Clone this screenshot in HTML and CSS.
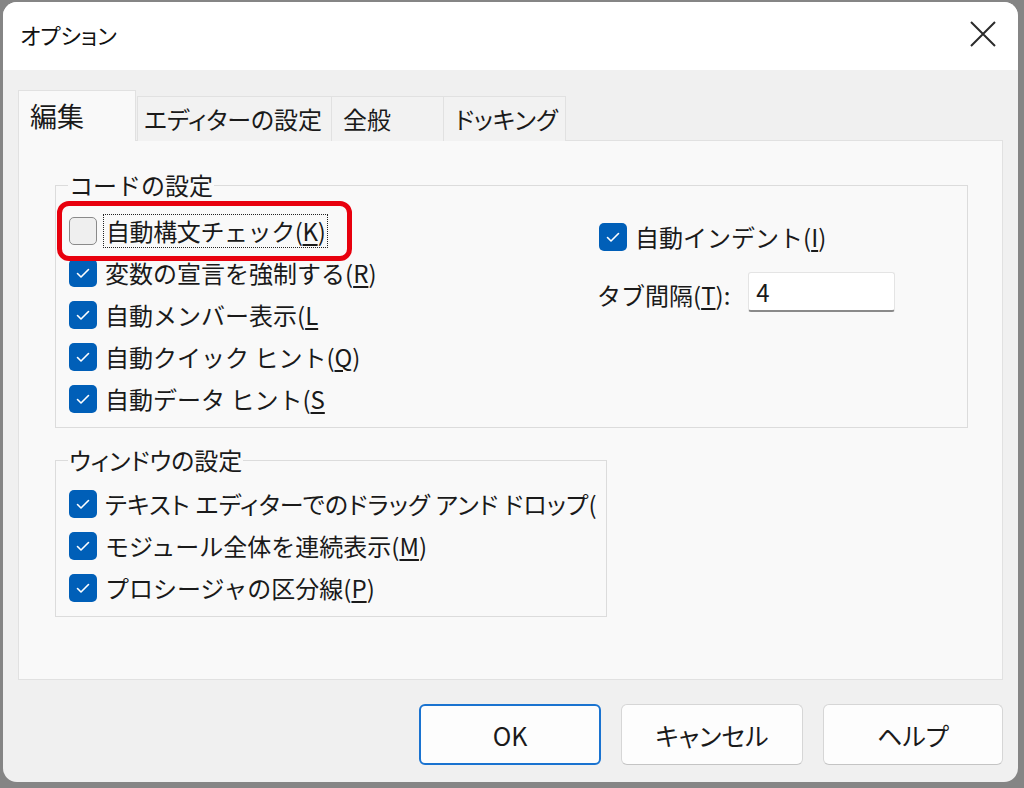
FILE: index.html
```html
<!DOCTYPE html>
<html lang="ja">
<head>
<meta charset="utf-8">
<title>オプション</title>
<link rel="stylesheet" href="styles.css">
</head>
<body>
<div class="window">
  <div class="titlebar">
    <span class="title">オプション</span>
    <svg class="close" width="26" height="26" viewBox="0 0 26 26"><path d="M1 1 L25 25 M25 1 L1 25" stroke="#2b2b2b" stroke-width="2" fill="none"/></svg>
  </div>
  <div class="content">
    <div class="tabs">
      <div class="tab active">編集</div>
      <div class="tab tab-editor">エディターの設定</div>
      <div class="tab tab-general">全般</div>
      <div class="tab tab-dock">ドッキング</div>
    </div>
    <div class="panel">
      <fieldset class="group group-code">
        <legend>コードの設定</legend>
        <div class="cols">
          <div class="col">
            <div class="row highlighted">
              <span class="cb off"></span>
              <span class="lbl focus">自動構文チェック(<u>K</u>)</span>
              <span class="redbox"></span>
            </div>
            <div class="row"><span class="cb on"><svg viewBox="0 0 28 28"><path d="M8.5 14.5 L12 18 L19.5 10.5"/></svg></span><span class="lbl">変数の宣言を強制する(<u>R</u>)</span></div>
            <div class="row"><span class="cb on"><svg viewBox="0 0 28 28"><path d="M8.5 14.5 L12 18 L19.5 10.5"/></svg></span><span class="lbl">自動メンバー表示(<u>L</u></span></div>
            <div class="row"><span class="cb on"><svg viewBox="0 0 28 28"><path d="M8.5 14.5 L12 18 L19.5 10.5"/></svg></span><span class="lbl">自動クイック ヒント(<u>Q</u>)</span></div>
            <div class="row"><span class="cb on"><svg viewBox="0 0 28 28"><path d="M8.5 14.5 L12 18 L19.5 10.5"/></svg></span><span class="lbl">自動データ ヒント(<u>S</u></span></div>
          </div>
          <div class="col col-right">
            <div class="row"><span class="cb on"><svg viewBox="0 0 28 28"><path d="M8.5 14.5 L12 18 L19.5 10.5"/></svg></span><span class="lbl">自動インデント(<u>I</u>)</span></div>
            <div class="tabrow">
              <span class="lbl">タブ間隔(<u>T</u>):</span>
              <span class="input">4</span>
            </div>
          </div>
        </div>
      </fieldset>
      <fieldset class="group group-window">
        <legend>ウィンドウの設定</legend>
        <div class="row"><span class="cb on"><svg viewBox="0 0 28 28"><path d="M8.5 14.5 L12 18 L19.5 10.5"/></svg></span><span class="lbl narrow">テキスト エディターでのドラッグ アンド ドロップ(</span></div>
        <div class="row"><span class="cb on"><svg viewBox="0 0 28 28"><path d="M8.5 14.5 L12 18 L19.5 10.5"/></svg></span><span class="lbl">モジュール全体を連続表示(<u>M</u>)</span></div>
        <div class="row"><span class="cb on"><svg viewBox="0 0 28 28"><path d="M8.5 14.5 L12 18 L19.5 10.5"/></svg></span><span class="lbl">プロシージャの区分線(<u>P</u>)</span></div>
      </fieldset>
    </div>
    <div class="footer">
      <button class="btn default">OK</button>
      <button class="btn">キャンセル</button>
      <button class="btn btn-help">ヘルプ</button>
    </div>
  </div>
</div>
</body>
</html>
```
FILE: styles.css
```css
* { box-sizing: border-box; }
html, body {
  margin: 0;
  padding: 0;
  width: 1024px;
  height: 788px;
  overflow: hidden;
  background: #858585;
  font-family: "Noto Sans CJK JP", "Noto Sans", sans-serif;
  color: #1a1a1a;
}
.window {
  margin: 2px 0 0 3px;
  width: 1015px;
  height: 780px;
  border-radius: 14px;
  overflow: hidden;
  background: #f0f0f0;
  display: flex;
  flex-direction: column;
}
.titlebar {
  height: 68px;
  background: #ffffff;
  display: flex;
  align-items: center;
  justify-content: space-between;
  padding: 0 22px 0 17px;
  flex: none;
}
.title {
  font-size: 22px;
  font-feature-settings: "palt";
  color: #111;
  margin-top: -4px;
}
.close { margin-top: -4px; }
.content {
  flex: 1;
  padding: 20px 15px 0 15px;
  display: flex;
  flex-direction: column;
}
.tabs {
  display: flex;
  align-items: flex-end;
  height: 51px;
  position: relative;
  z-index: 1;
  margin-bottom: -1px;
}
.tab {
  height: 45px;
  padding: 0 0 0 11px;
  font-size: 24px;
  font-feature-settings: "palt";
  line-height: 44px;
  background: #f2f2f2;
  border: 1px solid #e1e1e1;
  border-bottom: none;
  color: #1a1a1a;
  white-space: nowrap;
}
.tab.active {
  height: 51px;
  width: 118px;
  background: #f9f9f9;
  line-height: 50px;
  font-size: 27px;
  padding-left: 11px;
}
.tab-editor { width: 195px; padding-left: 6px; margin-left: 1px; }
.tab-general { width: 113px; margin-left: -1px; }
.tab-dock { width: 123px; margin-left: -1px; }
.panel {
  height: 540px;
  flex: none;
  background: #f9f9f9;
  border: 1px solid #e1e1e1;
  padding: 31px 0 0 36px;
}
.group {
  margin: 0;
  border: 1px solid #dcdcdc;
  padding: 12px 8px 7px 13px;
  min-width: 0;
}
.group legend {
  font-size: 24px;
  line-height: 26px;
  padding: 0 1px;
  margin-left: -1px;
}
.group-code { width: 913px; }
.group-window {
  width: 552px;
  margin-top: 19px;
  padding-top: 10px;
}
.group-window legend { font-feature-settings: "palt"; }
.cols {
  display: grid;
  grid-template-columns: 530px 1fr;
}
.col-right { padding-top: 6px; }
.row {
  height: 42px;
  display: flex;
  align-items: center;
  gap: 8px;
  font-size: 24px;
  white-space: nowrap;
}
.highlighted { position: relative; }
.redbox {
  position: absolute;
  left: -12px;
  top: -9px;
  width: 295px;
  height: 60px;
  border: 5px solid #e8000d;
  border-radius: 12px;
  pointer-events: none;
}
.cb {
  width: 28px;
  height: 28px;
  border-radius: 5px;
  flex: none;
  display: block;
}
.cb.on { background: #005fb8; }
.cb.on svg { width: 28px; height: 28px; display: block; }
.cb.on path { stroke: #ffffff; stroke-width: 1.6; fill: none; stroke-linecap: round; stroke-linejoin: round; }
.cb.off {
  background: #efefef;
  border: 1.5px solid #8a8a8a;
}
.lbl { line-height: 30px; }
.lbl u { text-underline-offset: 3px; text-decoration-thickness: 1.5px; }
.focus {
  outline: 1px dotted #222;
  padding: 0 2px;
  margin-left: -1px;
  line-height: 32px;
  letter-spacing: -0.4px;
}
.narrow {
  font-feature-settings: "palt";
  letter-spacing: 0.3px;
}
.tabrow {
  display: flex;
  align-items: center;
  margin-top: 14px;
  height: 40px;
  gap: 18px;
  font-size: 24px;
}
.tabrow .lbl { margin-top: 6px; margin-left: -2px; }
.input {
  width: 147px;
  height: 40px;
  background: #ffffff;
  border: 1px solid #e4e4e4;
  border-bottom: 2px solid #8a8a8a;
  border-radius: 3px;
  font-size: 24px;
  line-height: 38px;
  padding-left: 7px;
}
.footer {
  display: flex;
  justify-content: flex-end;
  gap: 20px;
  padding-top: 24px;
}
.btn {
  width: 182px;
  height: 61px;
  background: #fdfdfd;
  border: 1px solid #d6d6d6;
  border-bottom-color: #c4c4c4;
  border-radius: 6px;
  font-family: "Noto Sans CJK JP", "Noto Sans", sans-serif;
  font-size: 25px;
  font-feature-settings: "palt";
  color: #1a1a1a;
  padding: 0;
}
.btn-help { width: 180px; }
.btn.default {
  border: 2px solid #1a73d0;
}
```
